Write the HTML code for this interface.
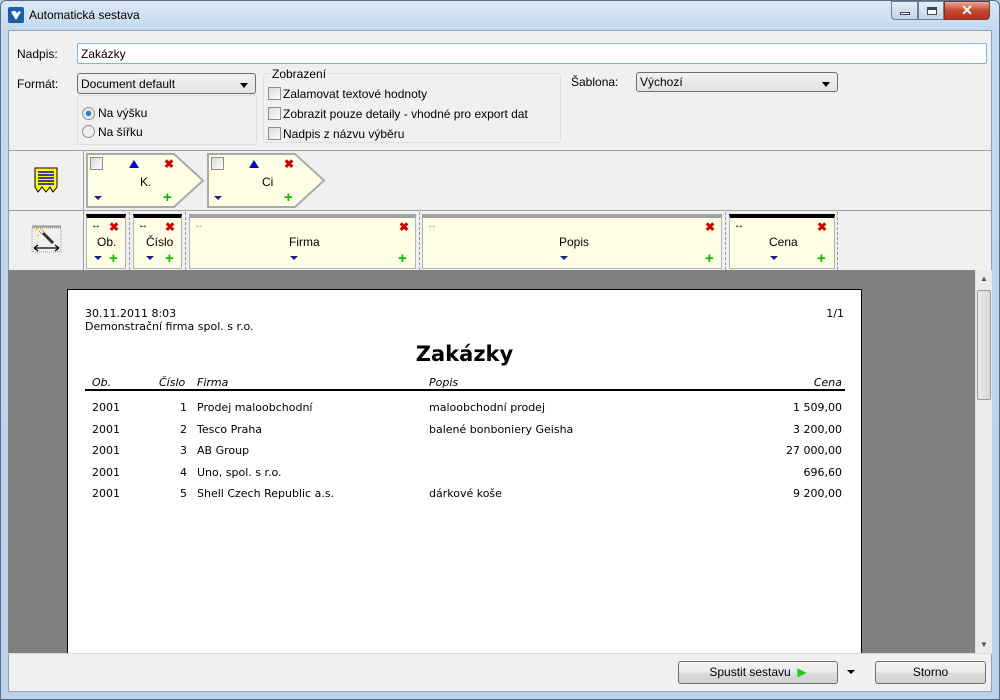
<!DOCTYPE html>
<html><head><meta charset="utf-8"><style>
*{margin:0;padding:0;box-sizing:border-box}
body{width:1000px;height:700px;overflow:hidden;background:#b9d1ea;font-family:"Liberation Sans",sans-serif;font-size:12px;color:#000;position:relative}
.a{position:absolute}
.win{left:0;top:0;width:1000px;height:700px;background:linear-gradient(#dbe8f6,#c4d8ee 30px,#bcd2ea);border:1px solid #5a6e86;border-radius:6px 6px 0 0}
.in{left:8px;top:30px;width:984px;height:662px;background:#f0f0f0;border:1px solid #8da2bb}
.inp{background:#fff;border:1px solid #7eb4ea;border-radius:2px}
.cmb{background:linear-gradient(#f2f2f2,#e3e3e3);border:1px solid #707070;border-radius:3px;padding:3px 3px;}
.cmb:after{content:"";position:absolute;right:7px;top:9px;border:4px solid transparent;border-top:5px solid #000;border-bottom:0}
.grp{border:1px solid #d5dfe5;border-radius:3px}
.cb{width:13px;height:13px;border:1px solid #8e8f8f;background:linear-gradient(135deg,#dcdcdc,#fbfbfb)}
.rb{width:13px;height:13px;border:1px solid #8e8f8f;border-radius:50%;background:#eee}
.cell{background:#ffffe6;border:1px solid #b4b4b4;border-top:4px solid #000}
.x{color:#c00;font-weight:bold;font-size:12px}
.p{color:#0b0;font-weight:bold;font-size:15px;line-height:12px}
.d{width:0;height:0;border:4px solid transparent;border-top:4px solid #1a237e;border-bottom:0}
.pg{font-family:"DejaVu Sans",sans-serif;font-size:11px}
.btn{background:linear-gradient(#f2f2f2,#ebebeb 50%,#dddddd 51%,#cfcfcf);border:1px solid #707070;border-radius:3px;text-align:center;line-height:21px}
.dot{border-left:1px dashed #999;width:0}
</style></head><body>
<div class="a win"></div>
<svg class="a" style="left:8px;top:7px" width="16" height="16"><rect width="16" height="16" rx="2" fill="#1b5fa8"/><path d="M3 5 Q8 2 9 7 Q10 3 13 5 L8 13 Z" fill="#fff"/></svg>
<div class="a" style="left:29px;top:8px;font-size:12px">Automatická sestava</div>
<div class="a" style="left:891px;top:1px;width:27px;height:19px;border:1px solid #6f7f93;border-radius:0 0 0 4px;background:linear-gradient(#e5eef8,#c4d4e6)"><div class="a" style="left:8px;top:10px;width:10px;height:3px;background:#fff;border:1px solid #444"></div></div>
<div class="a" style="left:918px;top:1px;width:26px;height:19px;border:1px solid #6f7f93;background:linear-gradient(#e5eef8,#c4d4e6)"><div class="a" style="left:8px;top:5px;width:10px;height:8px;border:1px solid #444;border-top-width:3px;background:#fff"></div></div>
<div class="a" style="left:944px;top:1px;width:46px;height:19px;border:1px solid #6f3a33;border-radius:0 0 4px 0;background:linear-gradient(#e9a99c,#c7472f 50%,#b8321b);color:#fff;font-weight:bold;text-align:center;font-size:14px;line-height:17px">✕</div>
<div class="a in"></div>
<div class="a" style="left:17px;top:47px">Nadpis:</div>
<div class="a inp" style="left:77px;top:43px;width:910px;height:21px;padding:3px 3px">Zakázky</div>
<div class="a" style="left:17px;top:77px">Formát:</div>
<div class="a cmb" style="left:77px;top:73px;width:179px;height:21px">Document default</div>
<div class="a grp" style="left:77px;top:95px;width:180px;height:50px"></div>
<div class="a rb" style="left:82px;top:107px;background:radial-gradient(#2a7fd4 30%,#eee 40%)"></div>
<div class="a" style="left:98px;top:106px">Na výšku</div>
<div class="a rb" style="left:82px;top:125px"></div>
<div class="a" style="left:98px;top:125px">Na šířku</div>
<div class="a grp" style="left:263px;top:73px;width:298px;height:70px"></div>
<div class="a" style="left:270px;top:67px;background:#f0f0f0;padding:0 2px">Zobrazení</div>
<div class="a cb" style="left:268px;top:87px"></div><div class="a" style="left:283px;top:87px">Zalamovat textové hodnoty</div>
<div class="a cb" style="left:268px;top:107px"></div><div class="a" style="left:283px;top:107px">Zobrazit pouze detaily - vhodné pro export dat</div>
<div class="a cb" style="left:268px;top:127px"></div><div class="a" style="left:283px;top:127px">Nadpis z názvu výběru</div>
<div class="a" style="left:571px;top:75px">Šablona:</div>
<div class="a cmb" style="left:636px;top:72px;width:202px;height:20px;padding-top:2px">Výchozí</div>
<div class="a" style="left:8px;top:150px;width:984px;height:1px;background:#a0a0a0"></div>
<div class="a" style="left:8px;top:210px;width:984px;height:1px;background:#a0a0a0"></div>
<div class="a" style="left:83px;top:151px;width:1px;height:119px;background:#a0a0a0"></div>
<svg class="a" style="left:34px;top:167px" width="24" height="26"><path d="M1 1H23V20L19 25 16 20 12 25 8 20 4 25 1 20Z" fill="#ff0" stroke="#000"/><g stroke="#00c" stroke-width="1.4"><path d="M4 5H20M4 8H20M4 11H20M4 14H20M4 17H20"/></g></svg>
<svg class="a" style="left:31px;top:225px" width="31" height="28"><path d="M1 1.5H30" stroke="#999" stroke-width="2"/><rect x="1" y="3" width="29" height="24" fill="none" stroke="#999" stroke-dasharray="1 1"/><path d="M9 5L22 18" stroke="#333" stroke-width="3"/><path d="M9 5L12 8" stroke="#fff" stroke-width="2"/><path d="M4 6L7 3M13 4L14 2M6 11L8 10" stroke="#fc0" stroke-width="1.5"/><path d="M3 23H28M3 23L7 20M3 23L7 26M28 23L24 20M28 23L24 26" stroke="#000" stroke-width="1.3" fill="none"/></svg>
<svg class="a" style="left:86px;top:153px" width="242" height="56"><path d="M1 1H88L117 27.5 88 54H1Z" fill="#ffffe6" stroke="#aaa" stroke-width="2"/><path d="M122 1H209L238 27.5 209 54H122Z" fill="#ffffe6" stroke="#aaa" stroke-width="2"/></svg>
<div class="a cb" style="left:90px;top:157px"></div><div class="a cb" style="left:211px;top:157px"></div>
<svg class="a" style="left:128px;top:159px" width="12" height="10"><path d="M6 1L11 9H1Z" fill="#00c"/></svg>
<svg class="a" style="left:248px;top:159px" width="12" height="10"><path d="M6 1L11 9H1Z" fill="#00c"/></svg>
<div class="a x" style="left:164px;top:157px">✖</div><div class="a x" style="left:284px;top:157px">✖</div>
<div class="a" style="left:140px;top:175px">K.</div><div class="a" style="left:262px;top:175px">Ci</div>
<div class="a d" style="left:94px;top:196px"></div><div class="a d" style="left:214px;top:196px"></div>
<div class="a p" style="left:163px;top:192px">+</div><div class="a p" style="left:284px;top:192px">+</div>
<!-- row 2 cells -->
<div class="a cell" style="left:86px;top:214px;width:40px;height:55px"></div>
<div class="a cell" style="left:133px;top:214px;width:49px;height:55px"></div>
<div class="a cell" style="left:189px;top:214px;width:227px;height:55px;border-top-color:#a0a0a0"></div>
<div class="a cell" style="left:422px;top:214px;width:300px;height:55px;border-top-color:#a0a0a0"></div>
<div class="a cell" style="left:729px;top:214px;width:106px;height:55px"></div>
<div class="a dot" style="left:129px;top:212px;height:58px"></div>
<div class="a dot" style="left:185px;top:212px;height:58px"></div>
<div class="a dot" style="left:419px;top:212px;height:58px"></div>
<div class="a dot" style="left:725px;top:212px;height:58px"></div>
<div class="a dot" style="left:837px;top:212px;height:58px"></div>
<div class="a" style="left:91px;top:220px;font-size:10px">↔</div><div class="a x" style="left:109px;top:220px">✖</div>
<div class="a" style="left:138px;top:220px;font-size:10px">↔</div><div class="a x" style="left:165px;top:220px">✖</div>
<div class="a" style="left:194px;top:220px;font-size:10px;color:#aaa">↔</div><div class="a x" style="left:399px;top:220px">✖</div>
<div class="a" style="left:427px;top:220px;font-size:10px;color:#aaa">↔</div><div class="a x" style="left:705px;top:220px">✖</div>
<div class="a" style="left:734px;top:220px;font-size:10px">↔</div><div class="a x" style="left:817px;top:220px">✖</div>
<div class="a" style="left:97px;top:235px">Ob.</div><div class="a" style="left:146px;top:235px">Číslo</div>
<div class="a" style="left:289px;top:235px">Firma</div><div class="a" style="left:559px;top:235px">Popis</div><div class="a" style="left:769px;top:235px">Cena</div>
<div class="a d" style="left:94px;top:256px"></div><div class="a p" style="left:109px;top:253px">+</div>
<div class="a d" style="left:146px;top:256px"></div><div class="a p" style="left:165px;top:253px">+</div>
<div class="a d" style="left:290px;top:256px"></div><div class="a p" style="left:398px;top:253px">+</div>
<div class="a d" style="left:560px;top:256px"></div><div class="a p" style="left:705px;top:253px">+</div>
<div class="a d" style="left:770px;top:256px"></div><div class="a p" style="left:817px;top:253px">+</div>
<!-- preview -->
<div class="a" style="left:8px;top:270px;width:967px;height:383px;background:#808080"></div>
<div class="a" style="left:975px;top:270px;width:17px;height:383px;background:#ebebeb;border-left:1px solid #ddd"></div>
<div class="a" style="left:977px;top:290px;width:14px;height:110px;background:linear-gradient(90deg,#eaeaea,#d8d8d8);border:1px solid #999;border-radius:2px"></div>
<div class="a" style="left:980px;top:274px;font-size:8px;color:#555">▲</div><div class="a" style="left:980px;top:640px;font-size:8px;color:#555">▼</div>
<div class="a pg" style="left:67px;top:289px;width:795px;height:364px;background:#fff;border:1px solid #000;border-bottom:0">
<div class="a" style="left:17px;top:17px;line-height:13px">30.11.2011 8:03<br>Demonstrační firma spol. s r.o.</div>
<div class="a" style="right:17px;top:17px">1/1</div>
<div class="a" style="left:0;width:793px;top:52px;text-align:center;font-size:21px;font-weight:bold">Zakázky</div>
<div class="a" style="left:17px;top:99px;width:760px;height:2px;background:#000"></div>
<div class="a" style="left:0;top:86px;width:795px;font-style:italic">
<span class="a" style="left:24px">Ob.</span><span class="a" style="left:91px">Číslo</span><span class="a" style="left:129px">Firma</span><span class="a" style="left:361px">Popis</span><span class="a" style="right:21px">Cena</span></div>
<div class="a" style="left:0;top:107px;width:795px;line-height:21.5px">
<div class="a" style="left:24px">2001<br>2001<br>2001<br>2001<br>2001</div>
<div class="a" style="left:100px;width:19px;text-align:right">1<br>2<br>3<br>4<br>5</div>
<div class="a" style="left:129px;white-space:nowrap">Prodej maloobchodní<br>Tesco Praha<br>AB Group<br>Uno, spol. s r.o.<br>Shell Czech Republic a.s.</div>
<div class="a" style="left:361px;white-space:nowrap">maloobchodní prodej<br>balené bonboniery Geisha<br><br><br>dárkové koše</div>
<div class="a" style="right:21px;text-align:right">1 509,00<br>3 200,00<br>27 000,00<br>696,60<br>9 200,00</div>
</div></div>
<div class="a" style="left:8px;top:653px;width:984px;height:1px;background:#d8d8d8"></div>
<div class="a btn" style="left:678px;top:661px;width:160px;height:23px">Spustit sestavu &nbsp;<span style="color:#2c2;font-size:12px">▶</span></div>
<div class="a" style="left:847px;top:670px;border:4px solid transparent;border-top:4px solid #000;border-bottom:0"></div>
<div class="a btn" style="left:875px;top:661px;width:111px;height:23px">Storno</div>
</body></html>
